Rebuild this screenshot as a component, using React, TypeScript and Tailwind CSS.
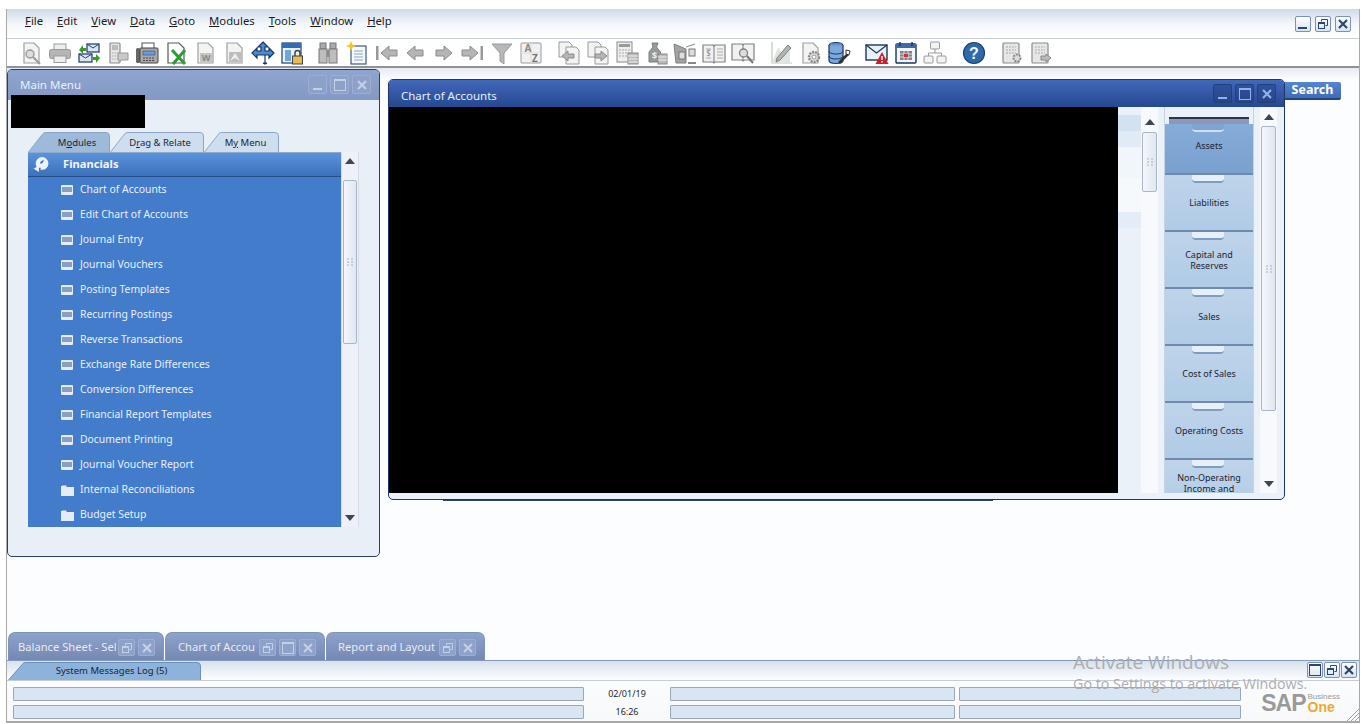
import type { ReactNode } from 'react'

const FONT = 'font-["Noto_Sans","Open_Sans",sans-serif]'

const menus = [
  ['F', 'ile'],
  ['E', 'dit'],
  ['V', 'iew'],
  ['D', 'ata'],
  ['G', 'oto'],
  ['M', 'odules'],
  ['T', 'ools'],
  ['W', 'indow'],
  ['H', 'elp'],
]

const financials = [
  'Chart of Accounts',
  'Edit Chart of Accounts',
  'Journal Entry',
  'Journal Vouchers',
  'Posting Templates',
  'Recurring Postings',
  'Reverse Transactions',
  'Exchange Rate Differences',
  'Conversion Differences',
  'Financial Report Templates',
  'Document Printing',
  'Journal Voucher Report',
]

const drawers = [
  ['Liabilities'],
  ['Capital and', 'Reserves'],
  ['Sales'],
  ['Cost of Sales'],
  ['Operating Costs'],
]

const GS = { stroke: '#8c8c8c', fill: '#e6e6e6', strokeWidth: 1.2 }

const Doc = () => <path d="M5 2h10l5 5v15H5z" fill="#f3f3f3" stroke="#a0a0a0" strokeWidth="1.2" />

// toolbar drawings, all on a 24 grid
const icons: Record<string, ReactNode> = {
  preview: (
    <>
      <Doc />
      <circle cx="11" cy="13" r="4" fill="#ddd" stroke="#999" strokeWidth="1.4" />
      <path d="M14 16l7 7" stroke="#999" strokeWidth="2" />
    </>
  ),
  print: (
    <>
      <rect x="6" y="3" width="12" height="6" fill="#eee" stroke="#999" />
      <rect x="1.5" y="8.5" width="21" height="9" rx="2" fill="#b5b5b5" stroke="#999" />
      <rect x="6" y="15" width="12" height="6.5" fill="#eee" stroke="#999" />
    </>
  ),
  mail: (
    <>
      <rect x="10" y="3" width="12" height="8" fill="#dbe7f5" stroke="#24466f" strokeWidth="1.3" />
      <path d="M10 3l6 4 6-4" fill="none" stroke="#24466f" />
      <rect x="2" y="13" width="13" height="8" fill="#dbe7f5" stroke="#24466f" strokeWidth="1.3" />
      <path d="M2 13l6.5 4 6.5-4" fill="none" stroke="#24466f" />
      <path d="M2 9l4-5v3h3v3H6v3z" fill="#3c9a2c" />
      <path d="M23 17l-4 5v-3h-3v-3h3v-3z" fill="#3c9a2c" />
    </>
  ),
  sms: (
    <>
      <rect x="4" y="2" width="10" height="20" rx="1" {...GS} />
      <rect x="6" y="4" width="6" height="5" fill="#bbb" />
      <path d="M6 12h6M6 15h6M6 18h6" stroke="#aaa" strokeDasharray="1.5 1" />
      <path d="M12 12h10v7h-7l-2 3v-3h-1z" fill="#c9c9c9" stroke="#999" />
    </>
  ),
  fax: (
    <>
      <rect x="7" y="2" width="12" height="6" fill="#fff" stroke="#555" />
      <rect x="1" y="7" width="4" height="15" rx="1.5" fill="#666" />
      <rect x="5" y="7" width="18" height="15" rx="1" fill="#a9a9a9" stroke="#444" />
      <rect x="8" y="10" width="12" height="4" fill="#6e9bd4" stroke="#2f4f7f" strokeWidth=".6" />
      <path d="M8 17h12M8 19.5h12" stroke="#444" strokeDasharray="2 1" />
    </>
  ),
  excel: (
    <>
      <path d="M4 2h11l5 5v15H4z" fill="#fff" stroke="#4d5d5d" strokeWidth="1.2" />
      <path d="M8 9l13 14M21 9L9 23" stroke="#2e9b33" strokeWidth="3" />
    </>
  ),
  word: (
    <>
      <Doc />
      <rect x="7" y="12" width="12" height="9" fill="#c6c6c6" />
      <text x="13" y="20" fontSize="9" fontWeight="700" textAnchor="middle" fill="#888">
        W
      </text>
    </>
  ),
  pdf: (
    <>
      <Doc />
      <rect x="7" y="11" width="12" height="10" fill="#bdbdbd" />
      <path d="M8 20l5-8 5 8-5-3z" fill="#eee" />
    </>
  ),
  move: (
    <path
      d="M12 1l5 5h-3v4h4V7l5 5-5 5v-3h-4v8h2l-2 1-2-1h2v-8H6v3l-5-5 5-5v3h4V6H7z"
      fill="#4b8bd0"
      stroke="#16365f"
      strokeWidth="1.2"
    />
  ),
  lock: (
    <>
      <rect x="2" y="2" width="19" height="20" fill="#eaf2fa" stroke="#1f3f6d" strokeWidth="1.2" />
      <rect x="2" y="2" width="19" height="5" fill="#2f6fb7" />
      <rect x="5" y="9" width="6" height="11" fill="#6fa4dc" />
      <path d="M15 15v-3a2.5 2.5 0 015 0v3" fill="none" stroke="#444" strokeWidth="1.5" />
      <rect x="12.5" y="15" width="10" height="8" fill="#e7bb4f" stroke="#444" />
    </>
  ),
  binoculars: (
    <>
      <rect x="4" y="2" width="6" height="6" fill="#aaa" stroke="#777" />
      <rect x="14" y="2" width="6" height="6" fill="#aaa" stroke="#777" />
      <rect x="3" y="8" width="8" height="14" fill="#bdbdbd" stroke="#777" />
      <rect x="13" y="8" width="8" height="14" fill="#bdbdbd" stroke="#777" />
      <rect x="11" y="9" width="2" height="7" fill="#888" />
    </>
  ),
  newdoc: (
    <>
      <rect x="6" y="5" width="15" height="18" fill="#f4f8fc" stroke="#3e5b78" strokeWidth="1.2" />
      <path d="M9 10h9M9 13h9M9 16h9M9 19h9" stroke="#8aa5c0" />
      <path d="M6 0l1.5 3.5L11 5 7.5 6.500 6 10 4.500 6.500 1 5l3.500-1.500z" fill="#f4c430" />
    </>
  ),
  first: (
    <>
      <rect x="2" y="5" width="2.500" height="14" fill="#999" />
      <path d="M7 12l8-7v4h8v6h-8v4z" fill="#b5b5b5" stroke="#8c8c8c" />
    </>
  ),
  prev: <path d="M4 12l8-7v4h8v6h-8v4z" fill="#b5b5b5" stroke="#8c8c8c" />,
  next: <path d="M20 12l-8-7v4H4v6h8v4z" fill="#b5b5b5" stroke="#8c8c8c" />,
  last: (
    <>
      <rect x="19.500" y="5" width="2.500" height="14" fill="#999" />
      <path d="M17 12L9 5v4H1v6h8v4z" fill="#b5b5b5" stroke="#8c8c8c" />
    </>
  ),
  filter: <path d="M2 3h20l-8 9v11l-4-3v-8z" fill="#b8b8b8" stroke="#999" />,
  sort: (
    <>
      <rect x="2" y="2" width="20" height="20" rx="1" fill="#f1f1f1" stroke="#999" />
      <path d="M2 12h20M12 2v20" stroke="#ddd" />
      <text x="9" y="11" fontSize="10" fontWeight="700" textAnchor="middle" fill="#888">
        A
      </text>
      <text x="16" y="21" fontSize="10" fontWeight="700" textAnchor="middle" fill="#777">
        Z
      </text>
    </>
  ),
  docPrev: (
    <>
      <path d="M2 1h10l3 3v12H2z" fill="#f3f3f3" stroke="#999" />
      <path d="M9 6h10l3 3v14H9z" fill="#f3f3f3" stroke="#999" />
      <path d="M5 15l6-5v3h6v4h-6v3z" fill="#b5b5b5" stroke="#8c8c8c" />
    </>
  ),
  docNext: (
    <>
      <path d="M2 1h10l3 3v12H2z" fill="#f3f3f3" stroke="#999" />
      <path d="M9 6h10l3 3v14H9z" fill="#f3f3f3" stroke="#999" />
      <path d="M21 15l-6-5v3H9v4h6v3z" fill="#b5b5b5" stroke="#8c8c8c" />
    </>
  ),
  calcCoins: (
    <>
      <rect x="2" y="1" width="15" height="20" fill="#ededed" stroke="#888" />
      <rect x="4" y="3" width="11" height="3" fill="#999" />
      <path d="M4 9h11M4 12h11M4 15h11" stroke="#aaa" strokeDasharray="2 1" />
      <rect x="13" y="12" width="10" height="11" fill="#bbb" stroke="#888" />
      <path d="M13 15h10M13 18h10M13 21h10" stroke="#eee" />
    </>
  ),
  bag: (
    <>
      <path d="M8 2h6l-1.500 4 4 5v10H5V11l4-5z" fill="#9a9a9a" stroke="#7d7d7d" />
      <text x="10.500" y="18" fontSize="9" fontWeight="700" textAnchor="middle" fill="#eee">
        $
      </text>
      <rect x="14" y="13" width="9" height="10" fill="#bbb" stroke="#888" />
      <path d="M14 16h9M14 19h9" stroke="#eee" />
    </>
  ),
  scale: (
    <>
      <path d="M1 3l12 5v14H3z" fill="#a4a4a4" stroke="#7d7d7d" />
      <rect x="6" y="11" width="6" height="7" fill="#ddd" stroke="#777" />
      <path d="M13 6l9-3" stroke="#888" />
      <rect x="16" y="8" width="6" height="7" fill="#ddd" stroke="#777" />
      <path d="M15 22h8" stroke="#888" strokeWidth="2" />
    </>
  ),
  book: (
    <>
      <path d="M1 4h10l1 1 1-1h10v17H13l-1 1-1-1H1z" fill="#f1f1f1" stroke="#808080" strokeWidth="1.2" />
      <path d="M12 5v16" stroke="#808080" />
      <path d="M15 8h6M15 11h6M15 14h6M15 17h6M4 8h5M4 17h5" stroke="#aaa" />
      <text x="6.500" y="15" fontSize="8" textAnchor="middle" fill="#888">
        $
      </text>
    </>
  ),
  bookSearch: (
    <>
      <path d="M1 3h10l1 1 1-1h10v16H13l-1 1-1-1H1z" fill="#f1f1f1" stroke="#808080" strokeWidth="1.2" />
      <path d="M12 4v15" stroke="#808080" />
      <circle cx="12.500" cy="12" r="4" fill="#ddd" stroke="#808080" strokeWidth="1.300" />
      <path d="M16 15l6 7" stroke="#777" strokeWidth="2" />
    </>
  ),
  pencil: (
    <>
      <path d="M3 1v21h20" fill="none" stroke="#bcc5bc" strokeWidth="1.200" />
      <path d="M3 22l6-16 6 8 6-4v12z" fill="#dfe6df" />
      <path d="M8 17l11-13 3 3-11 12-4 2z" fill="#b5b5b5" stroke="#777" />
    </>
  ),
  docGear: (
    <>
      <Doc />
      <circle cx="16" cy="16" r="5" fill="#ddd" stroke="#888" strokeWidth="2.400" strokeDasharray="2 1" />
      <circle cx="16" cy="16" r="2" fill="#fff" stroke="#999" />
    </>
  ),
  database: (
    <>
      <ellipse cx="9" cy="4.500" rx="7" ry="3" fill="#5e94d3" stroke="#18375f" strokeWidth="1.200" />
      <path d="M2 4.500v15c0 1.800 3 3 7 3s7-1.200 7-3v-15" fill="#7ba9de" stroke="#18375f" strokeWidth="1.200" />
      <path d="M2 10c0 1.800 3 3 7 3s7-1.200 7-3M2 15c0 1.800 3 3 7 3s7-1.200 7-3" fill="none" stroke="#18375f" />
      <path d="M12 22l9-9" stroke="#333" strokeWidth="2.600" />
      <path d="M19 9l4 1-1 4-3-1z" fill="#fff" stroke="#333" />
    </>
  ),
  alert: (
    <>
      <rect x="1" y="4" width="21" height="15" fill="#e8f1fa" stroke="#173660" strokeWidth="1.400" />
      <path d="M1 4l10.500 8L22 4" fill="none" stroke="#173660" strokeWidth="1.200" />
      <path d="M17 11l6.500 12h-13z" fill="#d01f26" />
      <path d="M17 15v4M17 20v1.500" stroke="#fff" strokeWidth="1.500" />
    </>
  ),
  calendar: (
    <>
      <rect x="2" y="3" width="20" height="19" rx="1" fill="#f2f6fb" stroke="#173660" strokeWidth="1.400" />
      <rect x="2" y="3" width="20" height="4" fill="#3e6aa7" />
      <path d="M6 1v4M18 1v4" stroke="#173660" strokeWidth="1.400" />
      <rect x="6" y="10" width="12" height="9" fill="#8c7f8c" />
      <path d="M6 13h12M6 16h12M10 10v9M14 10v9" stroke="#eee" strokeWidth=".8" />
      <rect x="10" y="13" width="4" height="3" fill="#c8343f" />
    </>
  ),
  tree: (
    <>
      <rect x="7.500" y="1" width="9" height="7" rx="1" fill="#f3f3f3" stroke="#999" />
      <path d="M12 8v4M5.500 15v-3h13v3" fill="none" stroke="#999" />
      <rect x="1" y="15" width="9" height="7" rx="1" fill="#f3f3f3" stroke="#999" />
      <rect x="14" y="15" width="9" height="7" rx="1" fill="#f3f3f3" stroke="#999" />
    </>
  ),
  help: (
    <>
      <circle cx="12" cy="12" r="10.500" fill="#2f69a8" stroke="#19406f" strokeWidth="1.200" />
      <text x="12" y="18" fontSize="16" fontWeight="700" textAnchor="middle" fill="#f2f6fb" fontFamily="Liberation Sans">
        ?
      </text>
    </>
  ),
  gridGear: (
    <>
      <rect x="3" y="2" width="16" height="20" rx="1" {...GS} />
      <path d="M6 6h10M6 9h10M6 12h10" stroke="#aaa" strokeDasharray="2 1" />
      <circle cx="17" cy="17" r="3.500" fill="#ddd" stroke="#888" strokeWidth="2" strokeDasharray="2 1" />
    </>
  ),
  gridArrow: (
    <>
      <rect x="3" y="2" width="16" height="20" rx="1" {...GS} />
      <path d="M6 6h10M6 9h10M6 12h10" stroke="#aaa" strokeDasharray="2 1" />
      <path d="M22 17l-5-4v2h-5v4h5v2z" fill="#bbb" stroke="#888" />
    </>
  ),
}

function ToolIcon({ name }: { name: string }) {
  return (
    <div className="flex h-[29px] w-[29px] shrink-0 items-center justify-center">
      <svg width="24" height="24" viewBox="0 0 24 24" className="overflow-visible">
        {icons[name]}
      </svg>
    </div>
  )
}

function ToolGroup({ names, className = '' }: { names: string[]; className?: string }) {
  return (
    <div className={`flex ${className}`}>
      {names.map((n) => (
        <ToolIcon key={n} name={n} />
      ))}
    </div>
  )
}

function WinGlyph({ kind, color }: { kind: string; color: string }) {
  return (
    <svg width="14" height="14" viewBox="0 0 14 14">
      {kind === 'min' && <rect x="2" y="10" width="9" height="2" fill={color} />}
      {kind === 'max' && (
        <>
          <rect x="1.500" y="1.500" width="11" height="11" fill="none" stroke={color} />
          <rect x="1" y="1" width="12" height="2" fill={color} />
        </>
      )}
      {kind === 'restore' && (
        <>
          <path d="M5.500 4.500v-2h6v6h-2" fill="none" stroke={color} />
          <rect x="2.500" y="5.500" width="6" height="6" fill="none" stroke={color} />
          <rect x="2" y="5" width="7" height="2" fill={color} />
        </>
      )}
      {kind === 'close' && <path d="M3 3l8 8M11 3l-8 8" stroke={color} strokeWidth="2.200" />}
    </svg>
  )
}

function LightBtn({ kind }: { kind: string }) {
  return (
    <div className="flex h-[16px] w-[16px] items-center justify-center rounded-[2px] border border-[#7c90b4] bg-gradient-to-b from-[#ffffff] to-[#d9e3f1]">
      <WinGlyph kind={kind} color="#2a4672" />
    </div>
  )
}

function DarkBtn({ kind }: { kind: string }) {
  return (
    <div className="flex h-[19px] w-[19px] items-center justify-center rounded-[2px] border border-[#22407e] bg-gradient-to-b from-[#2f529f] to-[#284686]">
      <WinGlyph kind={kind} color="#8db2ef" />
    </div>
  )
}

function FadedBtn({ kind, size = 'big' }: { kind: string; size?: string }) {
  return (
    <div
      className={`flex items-center justify-center rounded-[2px] border border-[#9cafd2] bg-[#8da2c9] ${
        size === 'big' ? 'h-[19px] w-[19px]' : 'h-[17px] w-[17px]'
      }`}
    >
      <WinGlyph kind={kind} color="#c3d0e8" />
    </div>
  )
}

function TabShape({ w, h, fill, stroke }: { w: number; h: number; fill: string; stroke: string }) {
  return (
    <svg width={w} height={h} className="absolute left-0 top-0">
      <path d={`M0.500 ${h} L15 1.500 Q16 0.500 18 0.500 H${w - 4} Q${w - 0.5} 0.500 ${w - 0.5} 4 V${h}`} fill={fill} stroke={stroke} />
    </svg>
  )
}

function MenuTab({ pre, ul, post, w, offset, active }: { pre: string; ul: string; post: string; w: number; offset: string; active?: boolean }) {
  return (
    <div className="relative h-[20px] shrink-0" style={{ width: w }}>
      <TabShape w={w} h={20} fill={active ? '#9dbadb' : '#cfdeee'} stroke="#8ea6c6" />
      <div className={`relative flex h-full items-center justify-center pt-[2px] text-[9.5px] text-[#1c2430] ${offset}`}>
        <span className="whitespace-pre">
          {pre}
          <span className="underline">{ul}</span>
          {post}
        </span>
      </div>
    </div>
  )
}

function ArrowBtn({ up, className = '' }: { up?: boolean; className?: string }) {
  return (
    <div className={`flex h-[16px] shrink-0 items-center justify-center ${className}`}>
      <svg width="10" height="6" viewBox="0 0 10 6">
        <path d={up ? 'M5 0l5 6H0z' : 'M5 6l5-6H0z'} fill="#3d4656" />
      </svg>
    </div>
  )
}

function Grip() {
  return (
    <svg width="6" height="8" viewBox="0 0 6 8">
      <path d="M0 1h2M4 1h2M0 4h2M4 4h2M0 7h2M4 7h2" stroke="#a5b2c2" />
    </svg>
  )
}

function ThumbBar({ thumbClass }: { thumbClass: string }) {
  return <div className={`mx-[1px] flex items-center justify-center rounded-[2px] border border-[#a9b6c6] bg-gradient-to-r from-[#f4f7fb] to-[#dfe7f1] ${thumbClass}`}><Grip /></div>
}

function Drawer({ lines, selected, className = '' }: { lines: string[]; selected?: boolean; className?: string }) {
  return (
    <div
      className={`relative flex shrink-0 flex-col items-center justify-center border-b-2 border-[#6f8aab] text-[9px] leading-[11px] text-[#1c2430] ${
        selected
          ? 'h-[51px] bg-gradient-to-b from-[#86acd9] to-[#7aa0cf]'
          : 'h-[57px] bg-gradient-to-b from-[#bed4ea] to-[#b0cbe6]'
      } ${className}`}
    >
      <div
        className={`absolute left-[27px] top-0 h-[8px] w-[32px] rounded-b-[4px] border-b-2 ${
          selected ? 'border-[#cfe0f2] bg-[#7fa4d2]' : 'border-[#7f9dc2] bg-[#e6f0f9]'
        }`}
      />
      {lines.map((l) => (
        <div key={l}>{l}</div>
      ))}
    </div>
  )
}

function TaskTab({ label, width, buttons, pad }: { label: string; width: number; buttons: string[]; pad: string }) {
  return (
    <div
      className={`flex h-[28px] shrink-0 items-center justify-between rounded-t-[7px] border border-b-0 border-[#7e92bc] bg-gradient-to-b from-[#8ea3cb] to-[#7488b4] pr-[8px] pt-[2px] text-[11.2px] text-[#e6ecf6] ${pad}`}
      style={{ width }}
    >
      <span className="whitespace-nowrap">{label}</span>
      <div className="flex gap-[3px]">
        {buttons.map((b) => (
          <FadedBtn key={b} kind={b} size="small" />
        ))}
      </div>
    </div>
  )
}

function StatusRow({ text }: { text: string }) {
  const cell = 'h-[14px] rounded-[1px] border border-[#9aa7b7] bg-[#d8e5f2]'
  return (
    <div className="flex items-center pl-[6px]">
      <div className={`${cell} w-[571px]`} />
      <div className="w-[86px] text-center text-[9px] text-[#1c2430]">{text}</div>
      <div className={`${cell} w-[285px]`} />
      <div className={`${cell} ml-[4px] w-[282px]`} />
    </div>
  )
}

export default function App() {
  return (
    <div className={`relative flex h-[724px] w-[1366px] flex-col overflow-hidden bg-white pb-[1px] pl-[6px] pr-[6px] pt-[9px] ${FONT}`}>
      <div className="flex min-h-0 flex-1 flex-col border-x border-b-2 border-[#a8a8a8] bg-[#fcfdfe]">
        {/* menu bar */}
        <div className="flex h-[30px] shrink-0 items-center justify-between border-b border-[#c9ced8] bg-gradient-to-b from-[#cfdae8] via-[#f3f6fa] to-white pl-[18px] pr-[8px]">
          <div className="flex gap-[14px] pb-[4px] text-[11.3px] text-[#1a1a1a]">
            {menus.map(([u, rest]) => (
              <span key={u}>
                <span className="underline">{u}</span>
                {rest}
              </span>
            ))}
          </div>
          <div className="flex gap-[4px]">
            <LightBtn kind="min" />
            <LightBtn kind="restore" />
            <LightBtn kind="close" />
          </div>
        </div>

        {/* toolbar */}
        <div className="flex h-[29px] shrink-0 items-center border-b-2 border-[#8f9399] bg-white pl-[9px]">
          <ToolGroup names={['preview', 'print', 'mail', 'sms', 'fax', 'excel', 'word', 'pdf', 'move', 'lock']} />
          <ToolGroup className="ml-[7px]" names={['binoculars', 'newdoc', 'first', 'prev', 'next', 'last', 'filter', 'sort']} />
          <ToolGroup className="ml-[9px]" names={['docPrev', 'docNext', 'calcCoins', 'bag', 'scale', 'book', 'bookSearch']} />
          <ToolGroup className="ml-[9px]" names={['pencil', 'docGear', 'database']} />
          <ToolGroup className="ml-[9px]" names={['alert', 'calendar', 'tree']} />
          <ToolGroup className="ml-[10px]" names={['help']} />
          <ToolGroup className="ml-[9px]" names={['gridGear', 'gridArrow']} />
        </div>

        {/* desktop */}
        <div className="relative min-h-0 flex-1 bg-gradient-to-b from-[#e6eaf0] via-[#fcfdfe] via-[2%] to-[#fcfdfe]">
          {/* main menu window */}
          <div className="absolute left-0 top-[1px] flex h-[488px] w-[373px] flex-col overflow-hidden rounded-[5px] border border-[#2b3f62] bg-[#e9eff6]">
            <div className="flex h-[30px] shrink-0 items-start justify-between bg-gradient-to-b from-[#8fa5cf] to-[#8399c4] pl-[12px] pr-[8px] pt-[5px] text-[11.5px] text-[#e8eef8]">
              <span className="pt-[1px]">Main Menu</span>
              <div className="flex gap-[3px]">
                <FadedBtn kind="min" />
                <FadedBtn kind="max" />
                <FadedBtn kind="close" />
              </div>
            </div>
            <div className="ml-[20px] mt-[32px] flex">
              <MenuTab pre="M" ul="o" post="dules" w={82} offset="pl-[16px]" active />
              <MenuTab pre="D" ul="r" post="ag & Relate" w={94} offset="pl-[6px]" />
              <MenuTab pre="M" ul="y" post=" Menu" w={75} offset="pl-[8px]" />
            </div>
            <div className="ml-[20px] flex h-[375px] w-[331px]">
              <div className="flex w-[313px] flex-col bg-[#427ccb]">
                <div className="flex h-[25px] shrink-0 items-center border-b border-t border-b-[#254d86] border-t-[#8ea9cb] bg-gradient-to-b from-[#5a93dc] to-[#3d70ba] pl-[4px] text-[11.2px] font-bold text-[#f2f6fb]">
                  <svg width="18" height="17" viewBox="0 0 16 16">
                    <circle cx="9" cy="7" r="6" fill="#eef3fa" />
                    <path d="M7 7a4 4 0 014-3l-2 3zM1 16l2-5h5l-2 5z" fill="#3f74bd" />
                    <path d="M1 12l5-3v6z" fill="#eef3fa" />
                  </svg>
                  <span className="ml-[13px]">Financials</span>
                </div>
                <div className="text-[10.4px] text-[#eaf0f9]">
                  {financials.map((item) => (
                    <div key={item} className="flex h-[25px] items-center pl-[33px]">
                      <svg width="12" height="10" viewBox="0 0 12 10">
                        <rect width="12" height="10" rx="1" fill="#e6ecf5" />
                        <rect x="1" y="2" width="10" height="5" fill="#8ba0bf" />
                      </svg>
                      <span className="ml-[7px]">{item}</span>
                    </div>
                  ))}
                  {['Internal Reconciliations', 'Budget Setup'].map((item) => (
                    <div key={item} className="flex h-[25px] items-center pl-[33px]">
                      <svg width="13" height="12" viewBox="0 0 13 12">
                        <path d="M0 2h5l1 1h7v9H0z" fill="#e6ecf5" />
                        <path d="M1 1h4l1 1H1z" fill="#9fb6d6" />
                      </svg>
                      <span className="ml-[6px]">{item}</span>
                    </div>
                  ))}
                </div>
              </div>
              <div className="flex w-[18px] flex-col border-x border-[#d3dce8] bg-[#eef2f8]">
                <ArrowBtn up className="mt-[1px]" />
                <ThumbBar thumbClass="mt-[11px] h-[164px]" />
                <ArrowBtn className="mb-[1px] mt-auto" />
              </div>
            </div>
          </div>

          {/* redacted logo */}
          <div className="absolute left-[4px] top-[27px] h-[33px] w-[134px] bg-black" />

          {/* window underneath */}
          <div className="absolute left-[436px] top-[431px] h-[2px] w-[550px] bg-[#2b3f62]" />

          {/* search */}
          <div className="absolute left-[1277px] top-[14px] flex h-[18px] w-[57px] items-center justify-center rounded-r-[2px] border-b-2 border-[#23457f] bg-gradient-to-b from-[#5586d0] to-[#3e6cb6] pt-[1px] text-[12.5px] font-bold text-white">
            Search
          </div>

          {/* chart of accounts window */}
          <div className="absolute left-[381px] top-[11px] flex h-[421px] w-[897px] flex-col overflow-hidden rounded-[5px] border border-[#1f3563] bg-[#eaf1f9]">
            <div className="flex h-[27px] shrink-0 items-center justify-between bg-gradient-to-b from-[#4268bc] to-[#254890] pl-[12px] pr-[8px] text-[11.5px] text-[#e8eef8]">
              <span className="pt-[4px]">Chart of Accounts</span>
              <div className="flex gap-[3px]">
                <DarkBtn kind="min" />
                <DarkBtn kind="max" />
                <DarkBtn kind="close" />
              </div>
            </div>
            <div className="flex min-h-0 flex-1">
              <div className="h-[386px] w-[729px] shrink-0 bg-black" />
              <div className="flex w-[23px] shrink-0 flex-col pt-[8px]">
                <div className="h-[16px] bg-[#d3e2f1]" />
                <div className="h-[16px] bg-[#e1ebf5]" />
                <div className="h-[31px] bg-[#f1f6fb]" />
                <div className="h-[34px] bg-[#f6f9fc]" />
                <div className="h-[16px] bg-[#e3edf7]" />
              </div>
              <div className="flex h-[386px] w-[17px] shrink-0 flex-col bg-[#f7f9fc] pt-[7px]">
                <ArrowBtn up />
                <ThumbBar thumbClass="mt-[2px] h-[60px]" />
              </div>
              <div className="ml-[6px] flex h-[386px] w-[90px] shrink-0 flex-col overflow-hidden border-x border-[#c7d3e2] pt-[10px]">
                <div className="mx-[4px] h-[7px] shrink-0 border-t-2 border-[#2b3552] bg-[#8e98b6]" />
                <Drawer lines={['Assets']} selected className="pb-[7px]" />
                {drawers.map((d) => (
                  <Drawer key={d[0]} lines={d} />
                ))}
                <Drawer lines={['Non-Operating', 'Income and']} className="pb-[10px]" />
              </div>
              <div className="ml-[6px] flex h-[386px] w-[17px] shrink-0 flex-col bg-[#f7f9fc] pb-[1px] pt-[2px]">
                <ArrowBtn up />
                <ThumbBar thumbClass="mt-[1px] h-[285px]" />
                <ArrowBtn className="mt-auto" />
              </div>
            </div>
          </div>

          {/* open window tabs */}
          <div className="absolute bottom-0 left-[1px] flex gap-[1px]">
            <TaskTab label="Balance Sheet - Sel" width={156} buttons={['restore', 'close']} pad="pl-[9px]" />
            <TaskTab label="Chart of Accou" width={160} buttons={['restore', 'max', 'close']} pad="pl-[12px]" />
            <TaskTab label="Report and Layout" width={159} buttons={['restore', 'close']} pad="pl-[11px]" />
          </div>
        </div>

        {/* status area */}
        <div className="relative flex h-[61px] shrink-0 flex-col border-t border-[#8399bb] bg-gradient-to-b from-[#d7e1ee] via-[#fbfcfe] via-[30%] to-[#f7f9fb]">
          <div className="flex h-[20px] items-end border-b border-[#c5ccd8] pl-[1px]">
            <div className="relative h-[18px] w-[193px]">
              <TabShape w={193} h={18} fill="#8db2dc" stroke="#6f8fb8" />
              <div className="relative flex h-full items-center justify-center pl-[14px] pt-[1px] text-[9.5px] text-[#1c2430]">System Messages Log (5)</div>
            </div>
          </div>
          <div className="mt-[6px] flex flex-col gap-[4px]">
            <StatusRow text="02/01/19" />
            <StatusRow text="16:26" />
          </div>
          <div className="absolute right-[2px] top-[1px] flex gap-[1px]">
            <LightBtn kind="max" />
            <LightBtn kind="restore" />
            <LightBtn kind="close" />
          </div>
          <div className="absolute bottom-[6px] right-[19px] flex items-center font-['Liberation_Sans',sans-serif]">
            <span className="text-[23px] font-bold leading-none tracking-[-1px] text-[#9a9a9a]">SAP</span>
            <div className="ml-[2px] flex flex-col leading-none">
              <span className="text-[8px] text-[#9a9a9a]">Business</span>
              <span className="-mt-[1px] text-[14px] font-bold text-[#f0a830]">One</span>
            </div>
          </div>
          <svg width="13" height="13" viewBox="0 0 13 13" className="absolute bottom-0 right-0">
            <path d="M1 13L13 1M5 13l8-8M9 13l4-4" stroke="#9aa3ad" />
          </svg>
        </div>
      </div>

      {/* windows activation watermark */}
      <div className="pointer-events-none absolute left-[1073px] top-[650px] font-['Open_Sans',sans-serif] text-[#adadad]">
        <div className="text-[19px] leading-[24px]">Activate Windows</div>
        <div className="text-[14.3px] leading-[20px]">Go to Settings to activate Windows.</div>
      </div>
    </div>
  )
}
